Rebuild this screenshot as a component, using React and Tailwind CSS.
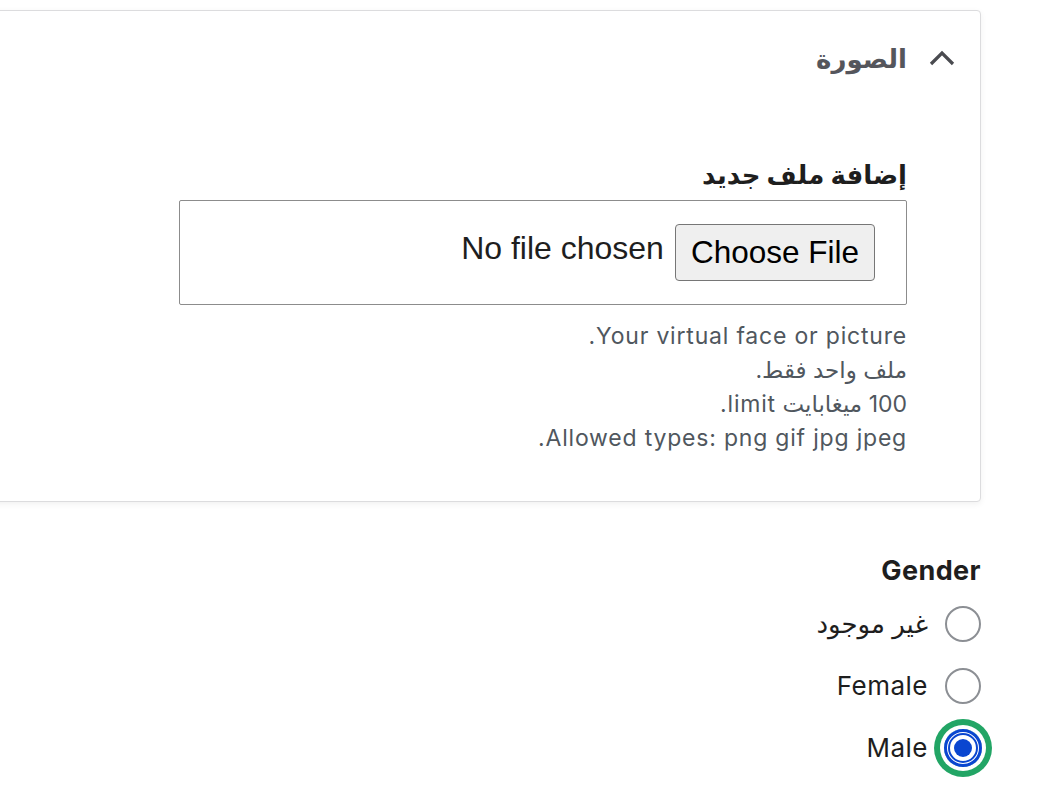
import React from "react";

const sans = "font-['Inter','DejaVu_Sans',sans-serif]";

const Radio = ({ label, checked }) => {
  return (
    <label className="flex items-center h-[62px] gap-[17px] cursor-pointer">
      {checked ? (
        <span className="flex items-center justify-center w-[38px] h-[38px] -mx-[1px] rounded-full border-[3px] border-[#0a46d0] ring-[6px] ring-[#22a565] ring-offset-[4px] ring-offset-white">
          <span className="flex items-center justify-center w-[30px] h-[30px] rounded-full border-2 border-[#0a46d0]">
            <span className="w-[18px] h-[18px] rounded-full bg-[#0a46d0]"></span>
          </span>
        </span>
      ) : (
        <span className="w-[36px] h-[36px] rounded-full border-2 border-[#8c8f94] bg-white"></span>
      )}
      <span className="text-[26px] leading-[32px] tracking-[0.5px] text-[#1e1e1e]">{label}</span>
    </label>
  );
};

const App = () => {
  return (
    <div dir="rtl" className={`min-h-screen bg-white pt-[10px] pr-[75px] ${sans}`}>
      {/* Image panel */}
      <div className="-ml-[12px] border border-[#dcdcde] rounded-[4px] bg-white shadow-[0_2px_6px_rgba(0,0,0,0.06)] pb-[46px]">
        <div className="flex items-center h-[94px] pr-[25px] gap-[22px]">
          <svg width="26" height="18" viewBox="0 0 26 18" fill="none">
            <path d="M2 15 L13 4 L24 15" stroke="#4a4b50" strokeWidth="3.2" strokeLinecap="butt" />
          </svg>
          <h2 className="text-[26px] font-bold text-[#55565c]">الصورة</h2>
        </div>

        <div className="pr-[73px] mt-[55px]">
          <div className="text-[26px] leading-[30px] font-bold text-[#1e1e1e]">إضافة ملف جديد</div>
          <div className="mt-[10px] w-[728px] h-[105px] border border-[#8c8c8c] rounded-[2px] flex items-center pr-[31px] gap-[11px] font-['Liberation_Sans',Arial,sans-serif]">
            <button className="h-[57px] px-[15px] bg-[#efefef] border border-[#767676] rounded-[4px] text-[31.5px] text-black">
              Choose File
            </button>
            <span className="mb-[10px] text-[32px] text-[#1e1e1e]">No file chosen</span>
          </div>
          <div className="mt-[14px] text-[23px] leading-[34px] tracking-[0.8px] text-[#50575e]">
            <div>Your virtual face or picture.</div>
            <div>ملف واحد فقط.</div>
            <div>100 ميغابايت limit.</div>
            <div>Allowed types: png gif jpg jpeg.</div>
          </div>
        </div>
      </div>

      {/* Gender */}
      <div className="mt-[53px]">
        <div className="text-[27px] leading-[32px] font-bold tracking-[0.4px] text-[#1e1e1e]">Gender</div>
        <div className="mt-[6px] flex flex-col">
          <Radio label="غير موجود" />
          <Radio label="Female" />
          <Radio label="Male" checked />
        </div>
      </div>
    </div>
  );
};

export default App;
